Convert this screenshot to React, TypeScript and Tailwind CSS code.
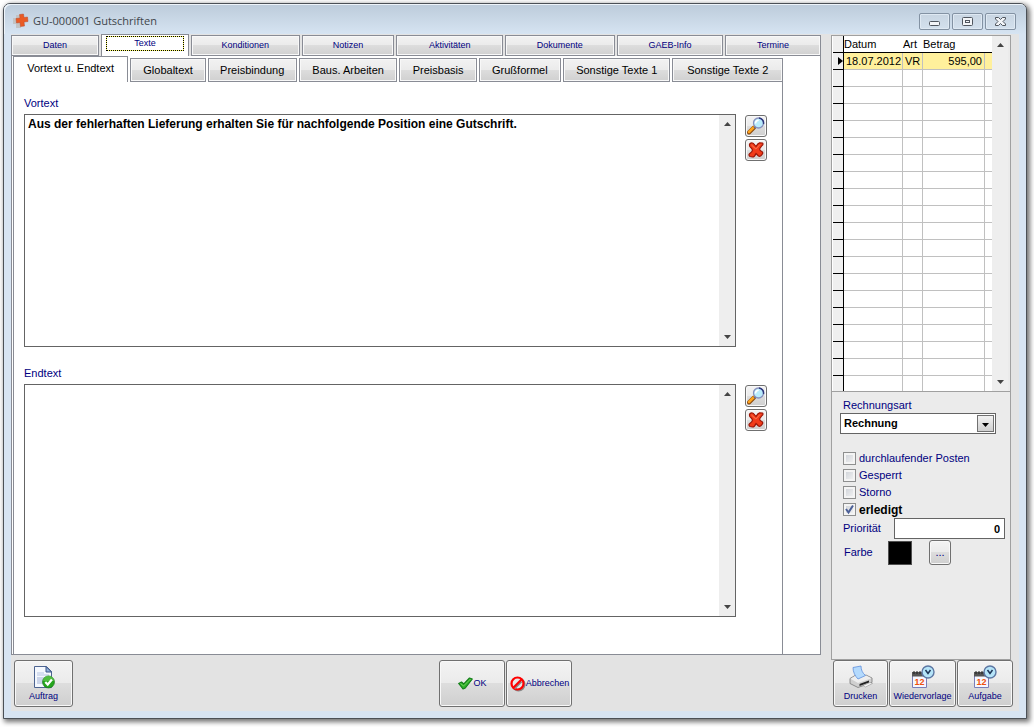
import { useState, type ReactNode } from "react";
import { clsx } from "clsx";

const mainTabs = [
  { label: "Daten", size: "grow-[88]" },
  { label: "Texte", size: "grow-[88]" },
  { label: "Konditionen", size: "grow-[109]" },
  { label: "Notizen", size: "grow-[93]" },
  { label: "Aktivitäten", size: "grow-[107]" },
  { label: "Dokumente", size: "grow-[110]" },
  { label: "GAEB-Info", size: "grow-[107]" },
  { label: "Termine", size: "grow-[96]" },
];

const textTabs = [
  { label: "Vortext u. Endtext", size: "grow-[116]" },
  { label: "Globaltext", size: "grow-[75]" },
  { label: "Preisbindung", size: "grow-[89]" },
  { label: "Baus. Arbeiten", size: "grow-[99]" },
  { label: "Preisbasis", size: "grow-[77]" },
  { label: "Grußformel", size: "grow-[82]" },
  { label: "Sonstige Texte 1", size: "grow-[108]" },
  { label: "Sonstige Texte 2", size: "grow-[111]" },
];

const emptyRows = Array.from({ length: 18 }, (_, i) => i);

const buttonFace =
  "rounded-[3px] border border-[#707070] bg-[linear-gradient(#f3f3f3,#ebebeb_48%,#dddddd_50%,#cfcfcf)] shadow-[inset_0_0_0_1px_#f8f8f8]";

const tabFace =
  "border border-[#898c95] bg-[linear-gradient(#f2f2f2,#ebebeb_48%,#dddddd_50%,#d0d0d0)] shadow-[inset_0_0_0_1px_#f8f8f8]";

export default function App() {
  return (
    <div className="flex min-h-screen bg-white pt-[3px] pr-[7px] pb-2 pl-[3px] font-['Liberation_Sans',Arial,sans-serif] text-[11px] text-[#00007f]">
      <main className="flex flex-1 flex-col rounded-t-[7px] border border-[#4b5056] bg-[#d7e4f2] shadow-[2px_2px_5px_1px_rgba(0,0,0,0.55)]">
        <TitleBar />
        <div className="mx-[7px] mb-[7px] flex flex-1 gap-[10px] bg-[#e3e3e3] pr-[6px] pb-1">
          <section className="flex min-w-0 flex-1 flex-col">
            <MainTabs />
            <TextPanel />
            <Footer />
          </section>
          <aside className="flex w-[182px] flex-col pt-px">
            <div className="mr-[2px] flex flex-1 flex-col border border-[#a0a0a0] bg-[#ebebeb]">
              <InvoiceGrid />
              <InvoiceForm />
            </div>
            <div className="ml-[2px] flex gap-px">
              <ToolButton label="Drucken" icon={<PrinterIcon />} className="w-[55px]" />
              <ToolButton label="Wiedervorlage" icon={<CalendarIcon />} className="flex-1" />
              <ToolButton label="Aufgabe" icon={<CalendarIcon />} className="w-[56px]" />
            </div>
          </aside>
        </div>
      </main>
    </div>
  );
}

function TitleBar() {
  return (
    <header className="flex h-[30px] items-center rounded-t-[6px] bg-linear-to-b from-[#bccbda] to-[#d6e4f2] pt-1 pr-[10px] pl-[9px] shadow-[inset_1px_1px_0_#eef4fa]">
      <LogoIcon />
      <h1 className="ml-1 flex-1 font-['Open_Sans','Noto_Sans',sans-serif] text-[11px] text-[#40454b]">
        GU-000001 Gutschriften
      </h1>
      <div className="flex gap-[2px]">
        <CaptionButton label="Minimieren">
          <rect x="5.5" y="6.5" width="10" height="4" rx="1" />
        </CaptionButton>
        <CaptionButton label="Maximieren">
          <rect x="5.5" y="2.5" width="10" height="8" rx="1" />
          <rect x="8.5" y="5.5" width="4" height="2" />
        </CaptionButton>
        <CaptionButton label="Schließen">
          <path d="M5.5 2.5h3l2 2 2-2h3v1.500l-2.500 2.500 2.500 2.500v1.500h-3l-2-2-2 2h-3V9L8 6.500 5.500 4z" />
        </CaptionButton>
      </div>
    </header>
  );
}

function CaptionButton({ label, children }: { label: string; children: ReactNode }) {
  return (
    <button
      type="button"
      aria-label={label}
      className="flex h-[17px] w-[31px] items-center justify-center rounded-[2px] border border-[#8392a3] bg-linear-to-b from-[#c8d5e2] to-[#d3e0ed] shadow-[inset_0_0_0_1px_#dfe9f3]"
    >
      <svg width="21" height="13" viewBox="0 0 21 13" fill="#f3f5f8" stroke="#50565f">
        {children}
      </svg>
    </button>
  );
}

function MainTabs() {
  const [active, setActive] = useState("Texte");

  return (
    <nav role="tablist" className="flex h-[22px] items-end gap-[2px]">
      {mainTabs.map((tab) => (
        <button
          key={tab.label}
          type="button"
          role="tab"
          aria-selected={tab.label === active}
          onClick={() => setActive(tab.label)}
          className={clsx(
            "min-w-0 basis-0 text-[9px]",
            tab.size,
            tab.label === active
              ? "h-[22px] border border-b-0 border-[#898c95] bg-white pb-1"
              : `h-[21px] ${tabFace}`
          )}
        >
          {tab.label === active ? (
            <span className="mx-1 flex h-[15px] items-center justify-center border border-dotted border-black bg-[#ffff66] bg-clip-border">
              <span className="flex h-full w-full items-center justify-center bg-white">{tab.label}</span>
            </span>
          ) : (
            tab.label
          )}
        </button>
      ))}
    </nav>
  );
}

function TextPanel() {
  const [active, setActive] = useState("Vortext u. Endtext");

  return (
    <div className="flex flex-1 flex-col border border-t-0 border-[#898c95] bg-white pr-[37px] pl-px">
      <nav role="tablist" className="flex h-[26px] items-end gap-[2px]">
        {textTabs.map((tab) => (
          <button
            key={tab.label}
            type="button"
            role="tab"
            aria-selected={tab.label === active}
            onClick={() => setActive(tab.label)}
            className={clsx(
              "min-w-0 basis-0 whitespace-nowrap text-black",
              tab.size,
              tab.label === active
                ? "h-[26px] border border-b-0 border-[#898c95] bg-white pb-[2px]"
                : `h-6 ${tabFace}`
            )}
          >
            {tab.label}
          </button>
        ))}
      </nav>
      <div className="flex flex-1 flex-col gap-[19px] border-x border-[#898c95] pt-[14px] pr-[15px] pb-[37px] pl-[10px]">
        <TextSection
          id="vortext"
          label="Vortext"
          text="Aus der fehlerhaften Lieferung erhalten Sie für nachfolgende Position eine Gutschrift."
        />
        <TextSection id="endtext" label="Endtext" text="" />
      </div>
    </div>
  );
}

interface TextSectionProps {
  id: string;
  label: string;
  text: string;
}

function TextSection({ id, label, text }: TextSectionProps) {
  return (
    <div className="flex flex-1 flex-col">
      <label htmlFor={id} className="mb-1 leading-[14px]">
        {label}
      </label>
      <div className="flex flex-1 gap-[9px]">
        <div className="flex flex-1 border border-[#646464] bg-white">
          <textarea
            id={id}
            defaultValue={text}
            className="flex-1 resize-none overflow-hidden px-[3px] py-[2px] text-[12px] leading-[14px] font-bold text-black outline-none"
          />
          <ScrollTrack />
        </div>
        <div className="flex flex-col gap-[2px] pt-px">
          <IconButton label={`${label} suchen`} icon={<SearchIcon />} />
          <IconButton label={`${label} löschen`} icon={<DeleteIcon />} />
        </div>
      </div>
    </div>
  );
}

function IconButton({ label, icon }: { label: string; icon: ReactNode }) {
  return (
    <button type="button" aria-label={label} className={clsx("flex size-[22px] items-center justify-center", buttonFace)}>
      {icon}
    </button>
  );
}

function ScrollTrack() {
  return (
    <div className="flex w-4 flex-col items-center justify-between bg-[#eeeeee] py-[7px]">
      <svg width="7" height="4" viewBox="0 0 7 4" fill="#444">
        <path d="M3.5 0 7 4H0z" />
      </svg>
      <svg width="7" height="4" viewBox="0 0 7 4" fill="#444">
        <path d="M0 0h7L3.5 4z" />
      </svg>
    </div>
  );
}

function Footer() {
  return (
    <footer className="flex pt-[5px] pl-[3px]">
      <ToolButton label="Auftrag" icon={<OrderIcon />} className="w-[59px]" />
      <div className="grow-[25]" />
      <div className="flex gap-px">
        <button type="button" className={clsx("flex h-[47px] w-[66px] items-center justify-center gap-px text-[9px]", buttonFace)}>
          <CheckIcon />
          OK
        </button>
        <button type="button" className={clsx("flex h-[47px] w-[66px] items-center justify-center text-[9px]", buttonFace)}>
          <CancelIcon />
          Abbrechen
        </button>
      </div>
      <div className="grow-[17]" />
    </footer>
  );
}

interface ToolButtonProps {
  label: string;
  icon: ReactNode;
  className?: string;
}

function ToolButton({ label, icon, className }: ToolButtonProps) {
  return (
    <button
      type="button"
      className={clsx("flex h-[47px] flex-col items-center justify-end gap-px pb-1 text-[9px] leading-3", buttonFace, className)}
    >
      {icon}
      {label}
    </button>
  );
}

function InvoiceGrid() {
  return (
    <div className="flex border-b border-[#a0a0a0] bg-white pl-px">
      <table className="flex-1 table-fixed border-separate border-spacing-0 text-black">
        <colgroup>
          <col className="w-[11px]" />
          <col className="w-[59px]" />
          <col className="w-5" />
          <col className="w-[62px]" />
          <col />
        </colgroup>
        <thead>
          <tr className="h-[17px] text-left leading-[14px]">
            <th className="border-r border-b border-black bg-[#efefef]" />
            <th className="border-b border-black font-normal">Datum</th>
            <th className="border-b border-black font-normal">Art</th>
            <th className="border-b border-black font-normal">Betrag</th>
            <th className="border-b border-black" />
          </tr>
        </thead>
        <tbody>
          <tr className="h-[17px] bg-[#fff09c] leading-[14px]">
            <td className="border-r border-b border-black bg-[#efefef]">
              <svg width="5" height="8" viewBox="0 0 5 8" className="ml-auto">
                <path d="M0 0l5 4-5 4z" />
              </svg>
            </td>
            <td className="border-r border-b border-[#c0c0c0] pl-[2px]">18.07.2012</td>
            <td className="border-r border-b border-[#c0c0c0] pl-[2px]">VR</td>
            <td className="border-r border-b border-[#c0c0c0] pr-[2px] text-right">595,00</td>
            <td className="border-b border-[#c0c0c0]" />
          </tr>
          {emptyRows.map((row) => (
            <tr key={row} className="h-[17px]">
              <td className="border-r border-b border-black bg-[#efefef]" />
              <td className="border-r border-b border-[#c0c0c0]" />
              <td className="border-r border-b border-[#c0c0c0]" />
              <td className="border-r border-b border-[#c0c0c0]" />
              <td className="border-b border-[#c0c0c0]" />
            </tr>
          ))}
          <tr className="h-[15px]">
            <td className="border-r border-black bg-[#efefef]" />
            <td className="border-r border-[#c0c0c0]" />
            <td className="border-r border-[#c0c0c0]" />
            <td className="border-r border-[#c0c0c0]" />
            <td />
          </tr>
        </tbody>
      </table>
      <ScrollTrack />
      <div className="w-[2px] bg-[#ebebeb]" />
    </div>
  );
}

function InvoiceForm() {
  return (
    <form className="flex flex-col pr-[5px] pl-2">
      <label htmlFor="art" className="mt-[5px] ml-[3px] leading-4">
        Rechnungsart
      </label>
      <div className="relative mr-[9px]">
        <select
          id="art"
          className="block h-[21px] w-full appearance-none border border-[#646464] bg-white pl-[3px] text-[11px] font-bold text-black"
        >
          <option>Rechnung</option>
          <option>Gutschrift</option>
        </select>
        <span className="pointer-events-none absolute top-[2px] right-[2px] flex h-[17px] w-[17px] items-center justify-center border border-[#707070] bg-linear-to-b from-[#f2f2f2] to-[#cfcfcf] pt-[2px]">
          <svg width="7" height="4" viewBox="0 0 7 4">
            <path d="M0 0h7L3.5 4z" />
          </svg>
        </span>
      </div>
      <div className="mt-4 ml-[3px] flex flex-col">
        <CheckField label="durchlaufender Posten" />
        <CheckField label="Gesperrt" />
        <CheckField label="Storno" />
        <CheckField label="erledigt" checked />
      </div>
      <div className="flex items-center justify-between">
        <label htmlFor="prio" className="ml-[3px]">
          Priorität
        </label>
        <input
          id="prio"
          defaultValue="0"
          className="h-[21px] w-[111px] border border-[#646464] bg-white px-1 text-right text-[11px] font-bold text-black"
        />
      </div>
      <div className="mt-px flex items-center">
        <span className="ml-1 w-11">Farbe</span>
        <span className="size-6 border border-[#505050] bg-black" />
        <button type="button" aria-label="Farbe wählen" className={clsx("ml-[17px] h-[25px] w-[22px]", buttonFace)}>
          ...
        </button>
      </div>
    </form>
  );
}

function CheckField({ label, checked = false }: { label: string; checked?: boolean }) {
  return (
    <label className={clsx("flex h-[17px] items-center gap-[3px]", checked && "text-[12px] font-bold text-black")}>
      <span className="grid">
        <input
          type="checkbox"
          defaultChecked={checked}
          className="peer col-start-1 row-start-1 size-[13px] appearance-none border border-[#8e8f8f] bg-linear-to-br from-[#cbcfd5] to-[#f6f6f6] shadow-[inset_0_0_0_2px_#f4f4f4]"
        />
        <svg
          width="13"
          height="13"
          viewBox="0 0 13 13"
          fill="none"
          stroke="#4b5f97"
          strokeWidth="2"
          className="pointer-events-none invisible col-start-1 row-start-1 peer-checked:visible"
        >
          <path d="M3 6l2.5 3.5L10 2.5" />
        </svg>
      </span>
      {label}
    </label>
  );
}

function LogoIcon() {
  return (
    <svg width="16" height="16" viewBox="0 0 16 16">
      <path d="M3 2h4v3h4v5H8v5H3v-4H0V5h3z" fill="#c3c3c3" />
      <path
        d="M6.500 1.500l4-.5.5 3.500 3.500-.5.500 4.500-4 .5.500 4-4 .5-.5-4-3.500.5L3 5.500 7 5z"
        fill="#ea5b24"
        stroke="#b8492a"
        strokeWidth=".5"
      />
    </svg>
  );
}

function SearchIcon() {
  return (
    <svg width="18" height="18" viewBox="0 0 18 18" className="shrink-0">
      <path d="M2 15.500l5-5" stroke="#8a4a10" strokeWidth="4" strokeLinecap="round" />
      <path d="M2 15l4.500-4.500" stroke="#ffa41c" strokeWidth="2.500" strokeLinecap="round" />
      <path d="M7 11l1.800-1.800" stroke="#606a80" strokeWidth="1.500" />
      <circle cx="11.500" cy="6" r="5" fill="#b9ecfd" stroke="#8790bd" strokeWidth="1.300" />
      <path d="M12 1a5 5 0 0 1 4.500 6" fill="none" stroke="#2c367c" strokeWidth="1.400" />
      <path d="M8.500 6.500c0-2 1.400-3.200 3.200-3.200" fill="none" stroke="#fff" strokeWidth="1.600" />
    </svg>
  );
}

function DeleteIcon() {
  return (
    <svg width="16" height="16" viewBox="0 0 16 16" className="shrink-0">
      <path
        d="M2 1.500C3.500.5 5.500 1 6 2l2 2.500C9 2.500 10 1 11.500.8l3 .2c.8.600.5 2-.5 2.500L11.500 7c.2 1.500 1.200 2.200 3 3 .5 1 0 2-.5 2.500-.8 1.500-2.500 2-3.500 1.500L8 11.500C7 14 6 15 4.500 15L2 14.500c-1-.5-1.500-2-.5-2.800C3.500 10.500 4.500 9.500 4.500 8 3.500 6 2.500 5.500 1.800 4.500c-.5-1-.5-2.200.2-3z"
        fill="#f23c1b"
        stroke="#9c1507"
        strokeWidth="1.200"
        strokeLinejoin="round"
      />
      <path d="M3.500 3l4.300 4 4.200-4.500" fill="none" stroke="#ff7a55" />
    </svg>
  );
}

function OrderIcon() {
  return (
    <svg width="22" height="24" viewBox="0 0 22 24">
      <path d="M1.500 1.500h12l5 5v16h-17z" fill="#f4f8fe" stroke="#4d6491" />
      <path d="M13 1.500V7h5.500z" fill="#8fb0da" stroke="#3c5588" />
      <path d="M4 8h7M4 10h12" stroke="#b6c4e2" />
      <path d="M4 12h9v7H4z" fill="#cbd5ea" />
      <circle cx="15.500" cy="17" r="6" fill="#25a51d" stroke="#117010" strokeWidth=".6" />
      <path d="M10 16a5.500 5.500 0 0 1 11 0z" fill="#6ccd56" opacity=".6" />
      <path d="M12.300 17l2.400 2.500 4.200-5" fill="none" stroke="#fff" strokeWidth="2.200" />
    </svg>
  );
}

function CheckIcon() {
  return (
    <svg width="15" height="13" viewBox="0 0 15 13">
      <path
        d="M.7 6.500 3.500 5l2.300 2L11.500 1l2.800 1-7 9L5 12z"
        fill="#2fb02b"
        stroke="#15801a"
        strokeWidth="1.200"
        strokeLinejoin="round"
      />
      <path d="M2.500 6.500l3 2.500 7-7" fill="none" stroke="#7edb62" strokeWidth=".8" />
    </svg>
  );
}

function CancelIcon() {
  return (
    <svg width="17" height="17" viewBox="0 0 17 17" fill="none" className="shrink-0">
      <circle cx="9.500" cy="9.500" r="6" stroke="#888" strokeWidth="2" />
      <circle cx="8.500" cy="8.500" r="6" fill="#e8e8e8" stroke="#ff0000" strokeWidth="2.200" />
      <path d="M5.500 13.500l7-7" stroke="#888" strokeWidth="2" />
      <path d="M4.500 12.500l8-8" stroke="#ff0000" strokeWidth="2.200" />
    </svg>
  );
}

function PrinterIcon() {
  return (
    <svg width="24" height="24" viewBox="0 0 24 24">
      <path d="M1 13.500l5-3 3.500 2.500 7.500-3 6 3v4.500L9 22.500l-8-4z" fill="#cfcfcf" stroke="#777" strokeWidth=".8" />
      <path d="M1.500 13.800 6 11l11-.5 5.500 2.800L9 18z" fill="#eeeeee" />
      <path d="M4 2.500 12 1c0 4 1.500 7 4.500 9.500L9 14C6 11 4 7 4 2.500z" fill="#b4dafd" stroke="#5f8fdc" strokeWidth=".8" />
      <path d="M10.500 19 20 15.500v2L10.500 21z" fill="#222" />
      <path d="M14 20.500l7-3 2.500 1-7 3.500z" fill="#f5f5f5" stroke="#888" strokeWidth=".5" />
    </svg>
  );
}

function CalendarIcon() {
  return (
    <svg width="24" height="24" viewBox="0 0 24 24">
      <path d="M1.500 9h14v13.500h-14z" fill="#f6f7ff" stroke="#7a7fb8" />
      <path d="M1 7h14v4.500H1z" fill="#555" />
      <path d="M3 6v3M6 6v3M9 6v3M12 6v3" stroke="#222" />
      <text x="8.500" y="20" textAnchor="middle" fontSize="9" fontWeight="bold" fill="#f0500c">
        12
      </text>
      <circle cx="17" cy="7" r="6" fill="#b5e4f8" stroke="#5d77a3" strokeWidth="1.400" />
      <path d="M14.500 5l2.500 3.500L19.500 5" fill="none" stroke="#1d3557" strokeWidth="1.500" />
    </svg>
  );
}
